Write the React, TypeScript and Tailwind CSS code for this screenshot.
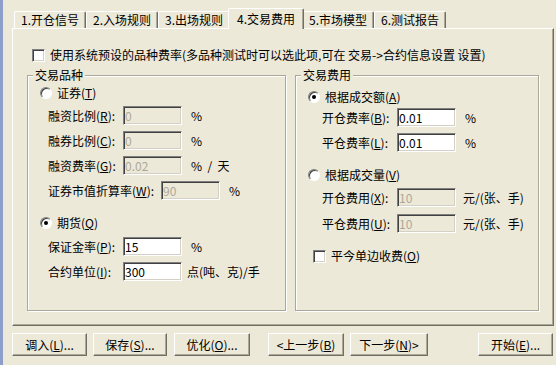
import type { ReactNode } from "react";

const TABS = ["1.开仓信号", "2.入场规则", "3.出场规则", "4.交易费用", "5.市场模型", "6.测试报告"];
const ACTIVE = 3;

function Key({ k }: { k: string }) {
    return (
        <span>
            (<u className="underline-offset-[1px]">{k}</u>)
        </span>
    );
}

function Field({ value, disabled, width = "w-[59px]" }: { value: string; disabled?: boolean; width?: string }) {
    return (
        <div
            className={`${width} h-[19px] border border-t-[#808080] border-l-[#808080] border-b-white border-r-white pl-[1px] leading-[17px] shadow-[inset_1px_1px_0_#404040,inset_-1px_-1px_0_#d4d0c8] ${
                disabled ? "bg-[#ece9d8] text-[#aca899]" : "bg-white text-black"
            }`}
        >
            {value}
        </div>
    );
}

function Radio({ checked }: { checked?: boolean }) {
    return (
        <div className="flex h-[12px] w-[12px] items-center justify-center rounded-full border border-t-[#808080] border-l-[#808080] border-b-white border-r-white bg-white shadow-[inset_1px_1px_0_#404040]">
            {checked && <div className="h-[4px] w-[4px] rounded-full bg-black" />}
        </div>
    );
}

function Check() {
    return (
        <div className="h-[13px] w-[13px] border border-t-[#808080] border-l-[#808080] border-b-white border-r-white bg-white shadow-[inset_1px_1px_0_#404040,inset_-1px_-1px_0_#d4d0c8]" />
    );
}

function Row({
    label,
    labelWidth = "w-[75px]",
    value,
    disabled,
    unit,
    unitGap = "ml-[9px]",
    className = "",
}: {
    label: ReactNode;
    labelWidth?: string;
    value: string;
    disabled?: boolean;
    unit: string;
    unitGap?: string;
    className?: string;
}) {
    return (
        <div className={`flex h-[19px] items-center ${className}`}>
            <div className={`${labelWidth} whitespace-nowrap`}>{label}</div>
            <Field value={value} disabled={disabled} />
            <div className={`${unitGap} whitespace-pre`}>{unit}</div>
        </div>
    );
}

function Group({ title, width, children }: { title: string; width: string; children: ReactNode }) {
    return (
        <fieldset className={`${width} h-[243px] border border-[#aca899] px-0 shadow-[inset_1px_1px_0_white,1px_1px_0_white]`}>
            <legend className="ml-[5px] bg-[#ece9d8] px-[2px] leading-[14px]">{title}</legend>
            {children}
        </fieldset>
    );
}

function Button({ width, children }: { width: string; children: ReactNode }) {
    return (
        <div
            className={`${width} flex h-[23px] items-center justify-center border border-t-white border-l-white border-b-[#716f64] border-r-[#716f64] shadow-[inset_-1px_-1px_0_#aca899] whitespace-nowrap`}
        >
            {children}
        </div>
    );
}

export default function App() {
    return (
        <div className="flex h-[365px] w-[556px] overflow-hidden bg-[#ece9d8] font-[family-name:'Noto_Sans_CJK_SC',sans-serif] text-[12px] leading-[14px] text-black">
            <div className="w-[3px] bg-[#8e9ecb]" />

            <div className="flex flex-1 flex-col pl-[9px] pr-[2px]">
                {/* tab strip */}
                <div className="flex h-[28px] items-end pl-[2px] pt-[8px]">
                    {TABS.map((t, i) =>
                        i === ACTIVE ? (
                            <div
                                key={t}
                                className="relative z-10 -mx-[2px] -mb-px flex h-[21px] w-[76px] items-start justify-center rounded-t-[2px] border-l border-t border-r border-l-white border-t-white border-r-[#716f64] bg-[#ece9d8] pt-[3px] shadow-[inset_-1px_0_0_#aca899]"
                            >
                                {t}
                            </div>
                        ) : (
                            <div
                                key={t}
                                className="flex h-[17px] w-[72px] items-center justify-center rounded-t-[2px] border-l border-t border-r border-l-white border-t-white border-r-[#716f64] shadow-[inset_-1px_0_0_#aca899]"
                            >
                                {t}
                            </div>
                        ),
                    )}
                </div>

                {/* tab panel */}
                <div className="flex h-[298px] flex-col border border-t-white border-l-white border-b-[#716f64] border-r-[#716f64] shadow-[inset_-1px_-1px_0_#aca899]">
                    <div className="mt-[19px] flex h-[14px] items-center pl-[19px]">
                        <Check />
                        <span className="ml-[5px] whitespace-pre">
                            使用系统预设的品种费率(多品种测试时可以选此项,可在 交易-&gt;合约信息设置 设置)
                        </span>
                    </div>

                    <div className="mt-[6px] flex gap-[9px] pl-[14px]">
                        <Group title="交易品种" width="w-[259px]">
                            <div className="flex flex-col pl-[12px]">
                                <div className="mt-[3px] flex h-[16px] items-center">
                                    <Radio />
                                    <span className="ml-[5px]">
                                        证券<Key k="T" />
                                    </span>
                                </div>
                                <div className="flex flex-col pl-[8px]">
                                    <Row className="mt-[5px]" label={<>融资比例<Key k="R" />:</>} value="0" disabled unit="%" />
                                    <Row className="mt-[6px]" label={<>融券比例<Key k="C" />:</>} value="0" disabled unit="%" />
                                    <Row className="mt-[6px]" label={<>融资费率<Key k="G" />:</>} value="0.02" disabled unit="%  /  天" />
                                    <Row
                                        className="mt-[6px]"
                                        label={<>证券市值折算率<Key k="W" />:</>}
                                        labelWidth="w-[113px]"
                                        value="90"
                                        disabled
                                        unit="%"
                                    />
                                </div>
                                <div className="mt-[15px] flex h-[16px] items-center">
                                    <Radio checked />
                                    <span className="ml-[5px]">
                                        期货<Key k="Q" />
                                    </span>
                                </div>
                                <div className="flex flex-col pl-[8px]">
                                    <Row className="mt-[6px]" label={<>保证金率<Key k="P" />:</>} value="15" unit="%" />
                                    <Row
                                        className="mt-[6px]"
                                        label={<>合约单位<Key k="I" />:</>}
                                        value="300"
                                        unit="点(吨、克)/手"
                                        unitGap="ml-[5px]"
                                    />
                                </div>
                            </div>
                        </Group>

                        <Group title="交易费用" width="w-[244px]">
                            <div className="flex flex-col pl-[12px]">
                                <div className="mt-[7px] flex h-[16px] items-center">
                                    <Radio checked />
                                    <span className="ml-[5px]">
                                        根据成交额<Key k="A" />
                                    </span>
                                </div>
                                <div className="flex flex-col pl-[14px]">
                                    <Row className="mt-[3px]" label={<>开仓费率<Key k="B" />:</>} value="0.01" unit="%" />
                                    <Row className="mt-[6px]" label={<>平仓费率<Key k="L" />:</>} value="0.01" unit="%" />
                                </div>
                                <div className="mt-[15px] flex h-[16px] items-center">
                                    <Radio />
                                    <span className="ml-[5px]">
                                        根据成交量<Key k="V" />
                                    </span>
                                </div>
                                <div className="flex flex-col pl-[14px]">
                                    <Row
                                        className="mt-[5px]"
                                        label={<>开仓费用<Key k="X" />:</>}
                                        value="10"
                                        disabled
                                        unit="元/(张、手)"
                                        unitGap="ml-[7px]"
                                    />
                                    <Row
                                        className="mt-[7px]"
                                        label={<>平仓费用<Key k="U" />:</>}
                                        value="10"
                                        disabled
                                        unit="元/(张、手)"
                                        unitGap="ml-[7px]"
                                    />
                                </div>
                                <div className="mt-[15px] flex h-[16px] items-center pl-[5px]">
                                    <Check />
                                    <span className="ml-[5px]">
                                        平今单边收费<Key k="O" />
                                    </span>
                                </div>
                            </div>
                        </Group>
                    </div>
                </div>

                {/* bottom buttons */}
                <div className="mt-[7px] flex">
                    <Button width="w-[75px]">
                        调入<Key k="L" />...
                    </Button>
                    <div className="ml-[6px]">
                        <Button width="w-[74px]">
                            保存<Key k="S" />...
                        </Button>
                    </div>
                    <div className="ml-[7px]">
                        <Button width="w-[76px]">
                            优化<Key k="O" />...
                        </Button>
                    </div>
                    <div className="ml-[18px]">
                        <Button width="w-[76px]">
                            &lt;上一步<Key k="B" />
                        </Button>
                    </div>
                    <div className="ml-[6px]">
                        <Button width="w-[78px]">
                            下一步<Key k="N" />&gt;
                        </Button>
                    </div>
                    <div className="ml-auto mr-px">
                        <Button width="w-[75px]">
                            开始<Key k="E" />...
                        </Button>
                    </div>
                </div>
            </div>
        </div>
    );
}
